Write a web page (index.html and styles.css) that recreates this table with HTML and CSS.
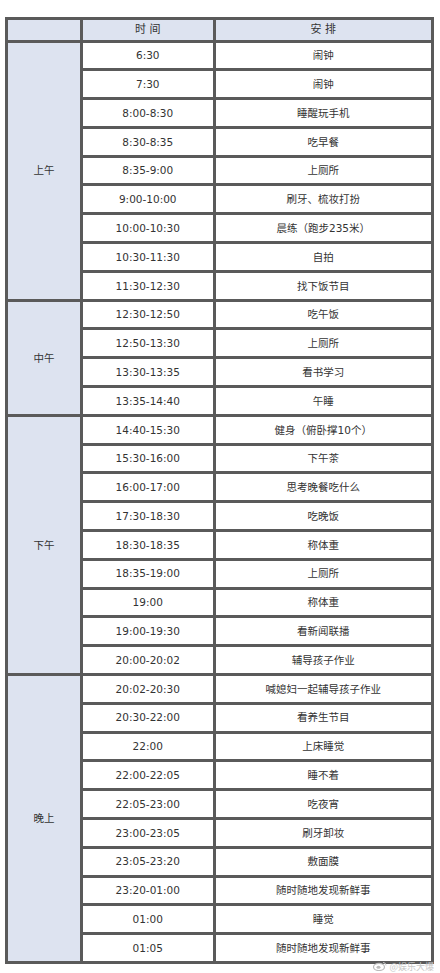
FILE: index.html
```html
<!DOCTYPE html>
<html lang="zh">
<head>
<meta charset="utf-8">
<link rel="stylesheet" href="styles.css">
</head>
<body>
<div class="page">
  <div class="sheet">
    <div class="cell head"></div>
    <div class="cell head">时 间</div>
    <div class="cell head">安 排</div>

    <div class="cell section s9">上午</div>
    <div class="cell">6:30</div><div class="cell">闹钟</div>
    <div class="cell">7:30</div><div class="cell">闹钟</div>
    <div class="cell">8:00-8:30</div><div class="cell">睡醒玩手机</div>
    <div class="cell">8:30-8:35</div><div class="cell">吃早餐</div>
    <div class="cell">8:35-9:00</div><div class="cell">上厕所</div>
    <div class="cell">9:00-10:00</div><div class="cell">刷牙、梳妆打扮</div>
    <div class="cell">10:00-10:30</div><div class="cell">晨练（跑步235米）</div>
    <div class="cell">10:30-11:30</div><div class="cell">自拍</div>
    <div class="cell">11:30-12:30</div><div class="cell">找下饭节目</div>

    <div class="cell section s4">中午</div>
    <div class="cell">12:30-12:50</div><div class="cell">吃午饭</div>
    <div class="cell">12:50-13:30</div><div class="cell">上厕所</div>
    <div class="cell">13:30-13:35</div><div class="cell">看书学习</div>
    <div class="cell">13:35-14:40</div><div class="cell">午睡</div>

    <div class="cell section s9">下午</div>
    <div class="cell">14:40-15:30</div><div class="cell">健身（俯卧撑10个）</div>
    <div class="cell">15:30-16:00</div><div class="cell">下午茶</div>
    <div class="cell">16:00-17:00</div><div class="cell">思考晚餐吃什么</div>
    <div class="cell">17:30-18:30</div><div class="cell">吃晚饭</div>
    <div class="cell">18:30-18:35</div><div class="cell">称体重</div>
    <div class="cell">18:35-19:00</div><div class="cell">上厕所</div>
    <div class="cell">19:00</div><div class="cell">称体重</div>
    <div class="cell">19:00-19:30</div><div class="cell">看新闻联播</div>
    <div class="cell">20:00-20:02</div><div class="cell">辅导孩子作业</div>

    <div class="cell section s10">晚上</div>
    <div class="cell">20:02-20:30</div><div class="cell">喊媳妇一起辅导孩子作业</div>
    <div class="cell">20:30-22:00</div><div class="cell">看养生节目</div>
    <div class="cell">22:00</div><div class="cell">上床睡觉</div>
    <div class="cell">22:00-22:05</div><div class="cell">睡不着</div>
    <div class="cell">22:05-23:00</div><div class="cell">吃夜宵</div>
    <div class="cell">23:00-23:05</div><div class="cell">刷牙卸妆</div>
    <div class="cell">23:05-23:20</div><div class="cell">敷面膜</div>
    <div class="cell">23:20-01:00</div><div class="cell">随时随地发现新鲜事</div>
    <div class="cell">01:00</div><div class="cell">睡觉</div>
    <div class="cell">01:05</div><div class="cell">随时随地发现新鲜事</div>
  </div>
  <div class="watermark">
    <svg class="wb" width="14" height="10" viewBox="0 0 14 10">
      <ellipse cx="6" cy="6" rx="5.5" ry="3.6" fill="none" stroke="#bbb" stroke-width="1.2"/>
      <ellipse cx="5.5" cy="6.3" rx="2" ry="1.5" fill="#bbb"/>
      <path d="M10 1.5 a3 3 0 0 1 3 3" fill="none" stroke="#ccc" stroke-width="1"/>
    </svg>
    <span>@娱乐大爆</span>
  </div>
</div>
</body>
</html>
```

FILE: styles.css
```css
html, body {
  margin: 0;
  padding: 0;
  background: #ffffff;
}

.page {
  position: relative;
  width: 440px;
  height: 973px;
  padding-top: 17px;
  padding-left: 5px;
  box-sizing: border-box;
}

.sheet {
  display: grid;
  grid-template-columns: 72px 129.5px 215.5px;
  grid-template-rows: 19.5px repeat(32, 25.8px);
  gap: 3px;
  padding: 3px;
  width: 429px;
  box-sizing: border-box;
  background: #5a5a5a;
  font-family: "DejaVu Sans", "Noto Sans CJK SC", sans-serif;
  font-size: 10.5px;
  color: #333333;
}

.cell {
  background: #ffffff;
  display: flex;
  align-items: center;
  justify-content: center;
  line-height: 1;
  white-space: nowrap;
}

.head {
  background: #dde3f0;
  font-size: 11px;
}

.section {
  background: #dde3f0;
  grid-column: 1;
}

.s9 { grid-row: span 9; }
.s4 { grid-row: span 4; }
.s10 { grid-row: span 10; }

.watermark {
  position: absolute;
  right: 6px;
  top: 961px;
  display: flex;
  align-items: center;
  gap: 2px;
  font-family: "Noto Sans CJK SC", sans-serif;
  font-size: 9px;
  color: #c8c8c8;
  line-height: 1;
}
```
